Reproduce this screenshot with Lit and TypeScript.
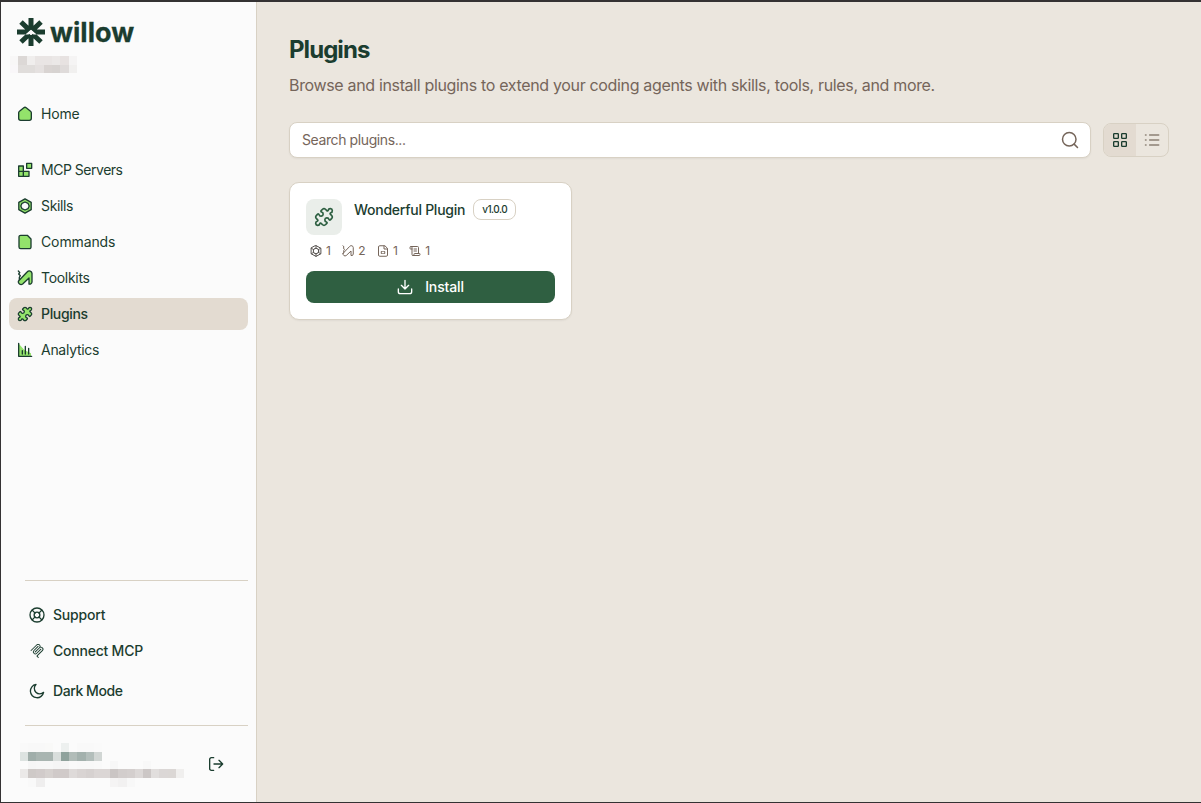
import { LitElement, html, css, svg } from "lit";
import { customElement, property } from "lit/decorators.js";

const PUZZLE =
  "M15.39 4.39a1 1 0 0 0 1.68-.474 2.5 2.5 0 1 1 3.014 3.015 1 1 0 0 0-.474 1.68l1.683 1.682a2.414 2.414 0 0 1 0 3.414L19.61 15.39a1 1 0 0 1-1.68-.474 2.5 2.5 0 1 0-3.014 3.015 1 1 0 0 1 .474 1.68l-1.683 1.682a2.414 2.414 0 0 1-3.414 0L8.61 19.61a1 1 0 0 0-1.68.474 2.5 2.5 0 1 1-3.014-3.015 1 1 0 0 0 .474-1.68l-1.683-1.682a2.414 2.414 0 0 1 0-3.414L4.39 8.61a1 1 0 0 1 1.68.474 2.5 2.5 0 1 0 3.014-3.015 1 1 0 0 1-.474-1.68l1.683-1.682a2.414 2.414 0 0 1 3.414 0z";
const SCREW = "M2 1.500l2.200 2.500-1.700 2 2.500 2.500-1.500 2.500v3.500";
const TOOL = "M2.300 16.500L15.500 2.700a4 4 0 0 1 7 2.300V18a3.500 3.500 0 0 1-4.500 3V12L8.500 21a4 4 0 0 1-6.200-4.500z";

const ICONS: Record<string, unknown> = {
  home: svg`<path class="f" d="M2.500 10.200a3 3 0 0 1 1.200-2.400l6.500-5.300a3 3 0 0 1 3.600 0l6.500 5.300a3 3 0 0 1 1.200 2.400V18.500a3 3 0 0 1-3 3h-13a3 3 0 0 1-3-3z"/>`,
  servers: svg`<path class="f" d="M2.500 6h7v8h-7zM2.500 14h7v7.500h-7zM9.500 14H18v7.500H9.500zM14.500 2h7.500v7.500h-7.500z"/>`,
  skills: svg`<path class="f" fill-rule="evenodd" d="M12 1.200l9.300 5.300v11l-9.300 5.300-9.300-5.300v-11zM12 6l-4.500 2-1.800 4L7.500 16l4.500 2 4.500-2 1.800-4L16.500 8z"/>`,
  commands: svg`<path class="f" d="M3 4.500a2.500 2.500 0 0 1 2.500-2.500h10l5.500 5.500V19.500a2.500 2.500 0 0 1-2.500 2.500h-13a2.500 2.500 0 0 1-2.500-2.500z"/>`,
  toolkits: svg`<path d="${SCREW}"/><path class="f" d="${TOOL}"/>`,
  puzzle: svg`<path class="f" d="${PUZZLE}"/>`,
  analytics: svg`<path class="nf" d="M3 3l8 9 10 5v4H3z"/><path d="M2.500 2v19.500H22M8 18v-5M12.500 18V6.500M17.500 18V9.500"/>`,
  support: svg`<circle cx="12" cy="12" r="10.500"/><circle cx="12" cy="12" r="4.300"/><path d="m4.930 4.930 4.240 4.240M14.830 9.170l4.240-4.240M14.830 14.830l4.240 4.240M9.170 14.830l-4.240 4.240"/>`,
  mcp: svg`<g fill="currentColor" stroke="none"><path d="M15.688 2.343a2.588 2.588 0 00-3.610 0l-9.626 9.440a.863.863 0 01-1.203 0 .823.823 0 010-1.180l9.626-9.440a4.313 4.313 0 016.016 0 4.116 4.116 0 011.204 3.540 4.300 4.300 0 013.609 1.180l.050.050a4.115 4.115 0 010 5.900l-8.706 8.537a.274.274 0 000 .393l1.788 1.754a.823.823 0 010 1.180.863.863 0 01-1.203 0l-1.788-1.753a1.920 1.920 0 010-2.754l8.706-8.538a2.470 2.470 0 000-3.540l-.050-.049a2.588 2.588 0 00-3.607-.003l-7.172 7.034-.002.002-.098.097a.863.863 0 01-1.204 0 .823.823 0 010-1.180l7.273-7.133a2.470 2.470 0 00-.003-3.537z"/><path d="M14.485 4.703a.823.823 0 000-1.180.863.863 0 00-1.204 0l-7.119 6.982a4.115 4.115 0 000 5.900 4.314 4.314 0 006.016 0l7.120-6.982a.823.823 0 000-1.180.863.863 0 00-1.204 0l-7.119 6.982a2.588 2.588 0 01-3.610 0 2.470 2.470 0 010-3.540l7.120-6.982z"/></g>`,
  moon: svg`<path d="M10.500 2.200A10 10 0 1 0 21.900 14 7 7 0 0 1 10.500 2.200z"/>`,
  logout: svg`<path d="M8.500 2.500H5a2.500 2.500 0 0 0-2.500 2.500v14a2.500 2.500 0 0 0 2.500 2.500h3.500M9 12H21.500M16.500 6.500l5.500 5.500-5.500 5.500"/>`,
  search: svg`<circle cx="11" cy="11" r="9"/><path d="M17.500 17.500L22 22"/>`,
  grid: svg`<rect x="2.500" y="2.500" width="7" height="7" rx="1"/><rect x="14.500" y="2.500" width="7" height="7" rx="1"/><rect x="2.500" y="14.500" width="7" height="7" rx="1"/><rect x="14.500" y="14.500" width="7" height="7" rx="1"/>`,
  list: svg`<path d="M8.500 4.500H22M8.500 12H22M8.500 19.500H22M2.300 4.500h.700M2.300 12h.700M2.300 19.500h.700"/>`,
  hex: svg`<path d="M12 1.200l9.800 5.300v11L12 22.800l-9.800-5.300v-11z"/><circle cx="12" cy="12" r="5.500"/><path d="M12 1.500v5M3 6.700l4.200 2.500M21 6.700l-4.200 2.500M12 22.500v-5M3 17.300l4.200-2.500M21 17.300l-4.200-2.500"/>`,
  tools: svg`<path d="${SCREW}"/><path d="${TOOL}"/>`,
  file: svg`<path d="M15 1.500H5.500a2.500 2.500 0 0 0-2.500 2.500v16a2.500 2.500 0 0 0 2.500 2.500h13a2.500 2.500 0 0 0 2.500-2.500V7.500zM14 2v6h6.500M10.500 13H8.500v4h2M13.500 13h2v4h-2"/>`,
  scroll: svg`<path d="M15 12h-5M15 8h-5M19 17V5a2 2 0 0 0-2-2H4M8 21h12a2 2 0 0 0 2-2v-1a1 1 0 0 0-1-1H11a1 1 0 0 0-1 1v1a2 2 0 1 1-4 0V5a2 2 0 1 0-4 0v2a1 1 0 0 0 1 1h3"/>`,
  download: svg`<path d="M12 2v13M6.500 9.500L12 15l5.500-5.500M2 15v4a3 3 0 0 0 3 3h14a3 3 0 0 0 3-3v-4"/>`,
};

@customElement("line-icon")
class LineIcon extends LitElement {
  @property() name = "";
  @property({ type: Number }) size = 16;
  @property({ type: Number }) weight = 2;
  static styles = css`
    :host { display: block; flex: none; }
    svg { display: block; fill: none; stroke: currentColor; stroke-linecap: round; stroke-linejoin: round; }
    .f { fill: var(--icon-fill, none); }
    .nf { fill: var(--icon-fill, none); stroke: none; }
  `;
  render() {
    return html`<svg width=${this.size} height=${this.size} viewBox="0 0 24 24" stroke-width=${this.weight}>${ICONS[this.name]}</svg>`;
  }
}

/* Redacted text, drawn as rows of flat tiles. */
@customElement("masked-text")
class MaskedText extends LitElement {
  @property({ attribute: false }) rows: string[][] = [];
  @property({ type: Number }) cw = 8.2;
  @property({ type: Number }) ch = 8.8;
  static styles = css`
    :host { display: block; }
    svg { display: block; }
  `;
  render() {
    const w = Math.max(...this.rows.map((r) => r.length)) * this.cw;
    return html`<svg width=${w} height=${this.rows.length * this.ch} shape-rendering="crispEdges">
      ${this.rows.map((r, y) =>
        r.map((c, x) =>
          c ? svg`<rect x=${x * this.cw} y=${y * this.ch} width=${this.cw} height=${this.ch} fill=${"#" + c}/>` : null
        )
      )}</svg>`;
  }
}

const ORG = [
  ["f8f7f7", "dcd8d6", "f0eeed", "e9e5e4", "e9e5e4", "ebe8e7", "e7e2e1", "f5f4f4"],
  ["f9f7f9", "e0dddb", "e0dddb", "e5e1e0", "d9d4d2", "d7d3d1", "dfdbda", "f1f0ef"],
];
const USER = [
  ["f9f9f9", "f8f8f8", "f8f8f8", "f9f9f8", "", "edf0ef", "", "f9f9f9", "f9f9f9", "fafafa"],
  ["dde3e1", "a0aeaa", "a9b5b1", "a9b5b1", "d9dedc", "8fa29c", "b1bcb8", "a3b1ad", "b3bebb", "d1d6d4"],
  ["", "f6f6f6", "f7f7f7", "f7f7f7", "f5f5f5", "f5f5f5", "f9f9f9", "f8f8f8", "f8f8f8", "f9f9f9", "", "f7f7f7", "", "", "", "f8f8f8"],
  ["ebe9e8", "cec9c7", "d1cbca", "d6d1cf", "d0cac9", "d0cac9", "dedad9", "d9d4d3", "d6d1d0", "dbd6d5", "dbd6d5", "cac5c4", "d2cdcc", "d4cfce", "dcd8d7", "ccc7c6", "e1dedd", "dbd7d6", "dbd7d5", "f0efee"],
  ["", "f9f9f9", "efeeee", "", "", "", "", "", "", "", "", "f5f4f4", "f2f1f1", "f8f8f8"],
];

@customElement("app-root")
class AppRoot extends LitElement {
  static styles = css`
    * { box-sizing: border-box; }
    :host {
      display: flex; width: 100%; height: 803px; overflow: hidden;
      border-top: 2px solid #343233; border-left: 1px solid #343233; border-bottom: 1px solid #343233;
      box-sizing: border-box; font-family: Inter, "Liberation Sans", sans-serif;
      background: #ebe6de; color: #1b3d2f; font-size: 14px; line-height: 20px;
    }
    .side { width: 256px; flex: none; background: #fbfbfb; border-right: 1px solid #d8d1c4; display: flex; flex-direction: column; }
    .logo { display: flex; gap: 5px; padding: 15px 16px 0; height: 54px; }
    .mark { display: block; width: 28px; height: 28px; margin-top: 1px; }
    .word { font-size: 27px; font-weight: 700; line-height: 30px; letter-spacing: 0.05px; padding-top: 1px; -webkit-text-stroke: 0.3px currentColor; }
    .org { padding-left: 9px; height: 42px; }
    nav { padding: 0 8px; display: flex; flex-direction: column; gap: 4px; }
    .item { height: 32px; border-radius: 8px; display: flex; align-items: center; gap: 8px; padding: 0 8px; --icon-fill: #93e36b; }
    .home { margin-bottom: 20px; }
    .active { background: #e3dbd1; font-weight: 500; }
    .foot { margin: auto 8px 0 24px; border-top: 1px solid #d8d1c4; padding: 18px 4px 18px; display: flex; flex-direction: column; gap: 4px; font-weight: 500; }
    .link { height: 32px; display: flex; align-items: center; gap: 8px; }
    .small { padding: 0 1px; gap: 9px; }
    .mode { margin-top: 4px; }
    .user { margin: 0 8px 0 24px; border-top: 1px solid #d8d1c4; height: 77px; display: flex; justify-content: space-between; padding: 17px 24px 0 0; }
    .who { margin-left: -5px; }
    .out { margin-top: 13px; }
    main { flex: 1; padding: 32px 32px 0; }
    h1 { margin: 0; font-size: 24px; line-height: 32px; font-weight: 700; letter-spacing: -0.95px; }
    .sub { margin: 7px 0 0; font-size: 16px; line-height: 24px; color: #75655a; letter-spacing: -0.34px; }
    .bar { display: flex; gap: 12px; align-items: center; margin-top: 25px; }
    .field { flex: 1; height: 36px; background: #fff; border: 1px solid #d8d1c4; border-radius: 8px; display: flex; align-items: center; justify-content: space-between; padding: 0 11px 0 12px; color: #75655a; box-shadow: 0 1px 2px #0000000d; }
    .ph { letter-spacing: -0.4px; }
    .views { display: flex; width: 66px; height: 34px; border: 1px solid #d8d1c4; border-radius: 8px; overflow: hidden; }
    .view { flex: 1; display: grid; place-items: center; color: #8c8074; }
    .on { background: #e3dbd1; color: #1b3d2f; }
    .card { width: 283px; height: 138px; margin-top: 24px; padding: 16px; background: #fff; border: 1px solid #d8d1c4; border-radius: 10px; box-shadow: 0 1px 2px #0000000d; }
    .head { display: flex; gap: 12px; }
    .tile { width: 36px; height: 36px; border-radius: 8px; background: #eaeeea; color: #2d5f41; display: grid; place-items: center; }
    .title { display: flex; gap: 8px; height: 22px; align-items: center; font-weight: 500; white-space: nowrap; }
    .name { letter-spacing: -0.26px; }
    .badge { height: 21px; line-height: 19px; border: 1px solid #d8d1c4; border-radius: 8px; padding: 0 8px; font-size: 10px; letter-spacing: -0.48px; margin-top: -1px; }
    .stats { display: flex; gap: 12px; padding: 8px 4px 0; color: #75655a; font-size: 12px; line-height: 16px; }
    .stat { display: flex; gap: 4px; align-items: center; }
    .first { color: #56524f; }
    .num { color: #75655a; letter-spacing: -0.6px; }
    .btn { margin-top: 12px; height: 32px; border-radius: 8px; background: #2f5f41; color: #fff; display: flex; align-items: center; justify-content: center; gap: 12px; font-weight: 500; }
    .go { letter-spacing: -0.15px; }
  `;
  nav(icon: string, text: string, ls: number, cls = "") {
    return html`<div class="item ${cls}"><line-icon name=${icon}></line-icon><span style="letter-spacing:${ls}px">${text}</span></div>`;
  }
  link(icon: string, text: string, ls: number, cls = "", size = 16) {
    return html`<div class="link ${cls}"><line-icon name=${icon} size=${size}></line-icon><span style="letter-spacing:${ls}px">${text}</span></div>`;
  }
  stat(icon: string, n: number, cls = "") {
    return html`<div class="stat ${cls}"><line-icon name=${icon} size="12"></line-icon><span class="num">${n}</span></div>`;
  }
  render() {
    return html`
      <aside class="side">
        <div class="logo">
          <svg class="mark" viewBox="0 0 28 28" fill="none" stroke="#1b3d2f" stroke-width="5">
            <path d="M14 0v12.500M14 28V17M0 14h11M28 14h-11M4 4l9 8.600M24 4l-9 8.600M4 24l8.500-8M24 24l-8.500-8"/>
            <path d="M8.300 16.500L14 11.800l5.700 4.700h-3L14 14.900l-2.700 1.600z" fill="#fbfbfb" stroke="none"/>
          </svg>
          <span class="word">willow</span>
        </div>
        <div class="org"><masked-text .rows=${ORG} cw="8.4" ch="8.5"></masked-text></div>
        <nav>
          ${this.nav("home", "Home", -0.2, "home")}
          ${this.nav("servers", "MCP Servers", -0.48)}
          ${this.nav("skills", "Skills", -0.35)}
          ${this.nav("commands", "Commands", -0.12)}
          ${this.nav("toolkits", "Toolkits", -0.3)}
          ${this.nav("puzzle", "Plugins", -0.35, "active")}
          ${this.nav("analytics", "Analytics", -0.28)}
        </nav>
        <div class="foot">
          ${this.link("support", "Support", -0.2)}
          ${this.link("mcp", "Connect MCP", -0.22, "small", 14)}
          ${this.link("moon", "Dark Mode", -0.43, "mode")}
        </div>
        <div class="user">
          <masked-text class="who" .rows=${USER}></masked-text>
          <line-icon class="out" name="logout"></line-icon>
        </div>
      </aside>
      <main>
        <h1>Plugins</h1>
        <p class="sub">Browse and install plugins to extend your coding agents with skills, tools, rules, and more.</p>
        <div class="bar">
          <div class="field"><span class="ph">Search plugins...</span><line-icon name="search" size="18"></line-icon></div>
          <div class="views">
            <div class="view on"><line-icon name="grid"></line-icon></div>
            <div class="view"><line-icon name="list" weight="2.4"></line-icon></div>
          </div>
        </div>
        <section class="card">
          <div class="head">
            <div class="tile"><line-icon name="puzzle" size="20"></line-icon></div>
            <div class="title"><span class="name">Wonderful Plugin</span><span class="badge">v1.0.0</span></div>
          </div>
          <div class="stats">
            ${this.stat("hex", 1, "first")}${this.stat("tools", 2)}${this.stat("file", 1)}${this.stat("scroll", 1)}
          </div>
          <div class="btn"><line-icon name="download"></line-icon><span class="go">Install</span></div>
        </section>
      </main>
    `;
  }
}
